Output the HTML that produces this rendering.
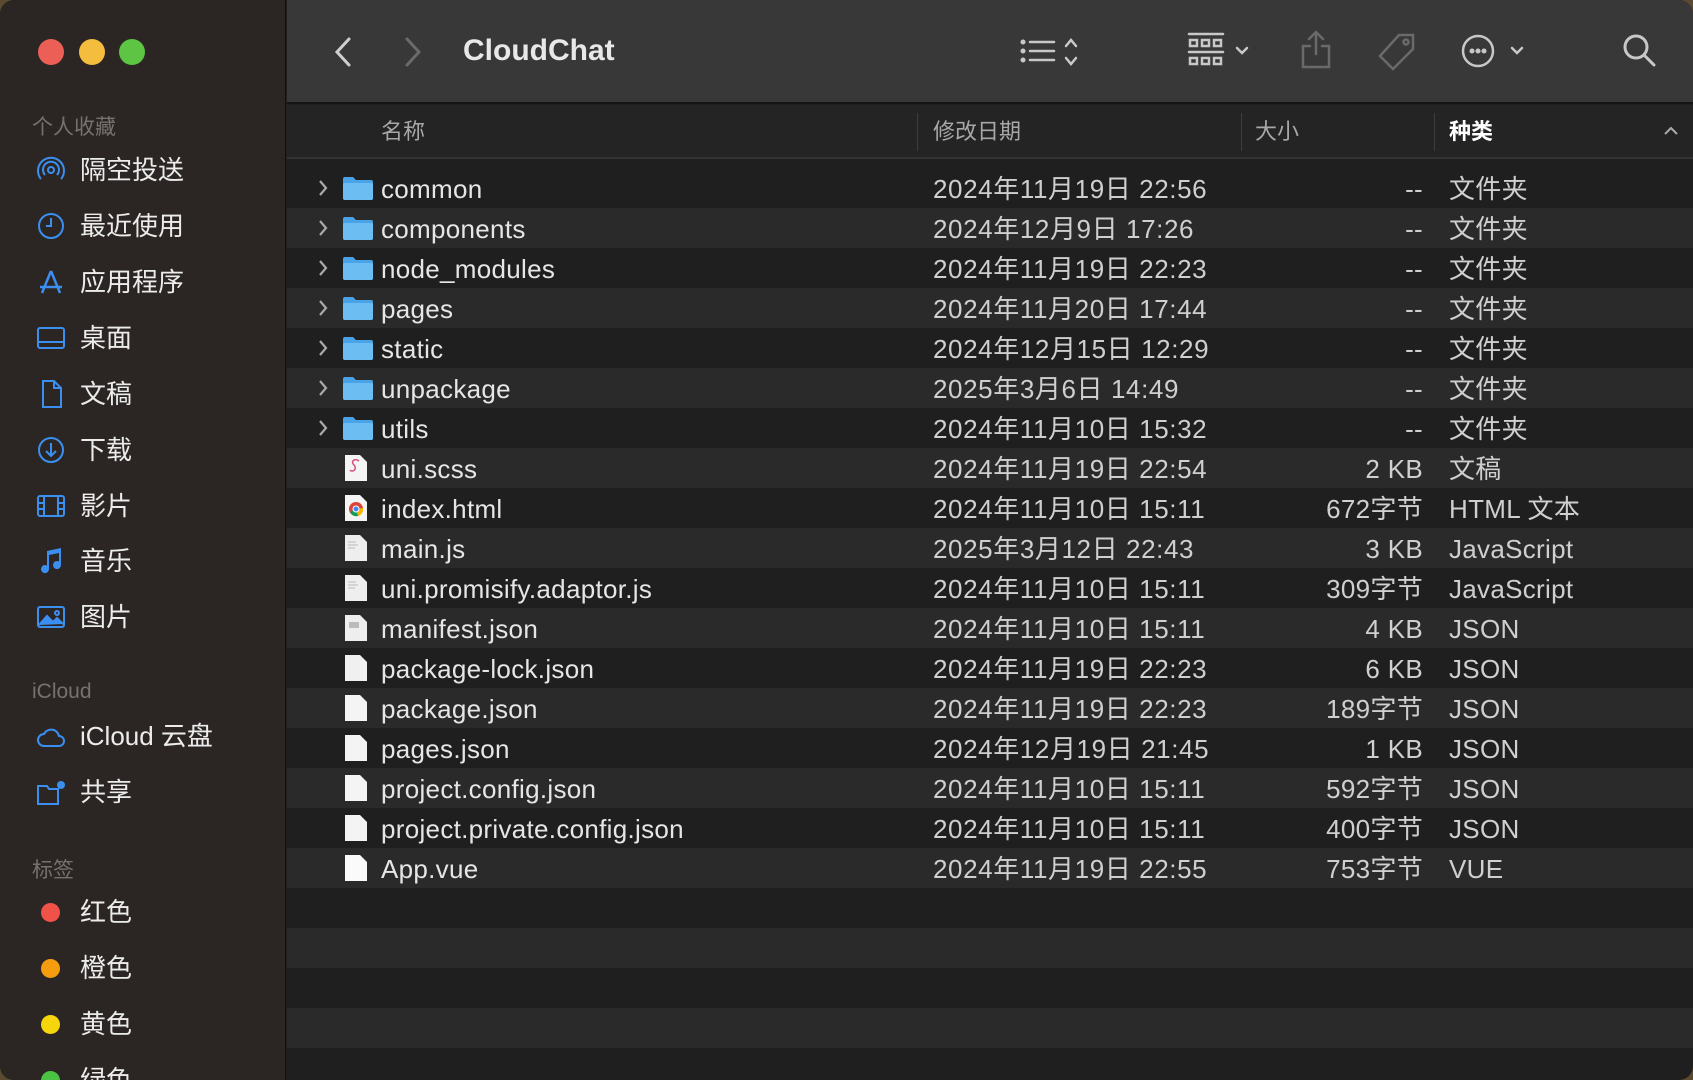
<!DOCTYPE html>
<html><head><meta charset="utf-8"><style>
*{margin:0;padding:0;box-sizing:border-box}
body{width:1693px;height:1080px;overflow:hidden;background:#5a4a30;font-family:"Liberation Sans","Noto Sans CJK SC",sans-serif;}
.win{position:absolute;left:0;top:0;width:1693px;height:1080px;border-radius:14px;overflow:hidden;background:#1f1f1f;}
.side{position:absolute;left:0;top:0;width:286px;height:1080px;background:#2b2624;border-right:1px solid #111;}
.tl{position:absolute;top:39px;width:26px;height:26px;border-radius:50%}
.lbl{position:absolute;left:32px;font-size:21px;color:#77716e}
.it{position:absolute;left:80px;font-size:26px;color:#ececec;line-height:32px}
.ic{position:absolute;left:36px;width:30px;height:30px}
.tool{position:absolute;left:287px;top:0;right:0;height:104px;background:#383838;border-bottom:2px solid #151515}
.hdr{position:absolute;left:287px;top:105px;right:0;height:54px;background:#242424;border-bottom:2px solid #333}
.hdr span{position:absolute;top:13px;font-size:22px;color:#a8a8a8;line-height:28px}
.sep{position:absolute;top:8px;width:1px;height:38px;background:#3c3c3c}
.rows{position:absolute;left:287px;top:0;width:1406px;height:1080px}
.row{position:absolute;left:0;width:1406px;height:40px;font-size:26px;color:#e6e6e6}
.row.a{background:#2a2a2a}
.row span{position:absolute;top:6px;white-space:nowrap;line-height:30px;letter-spacing:0.3px}
.nm{left:94px}.dt{left:646px;color:#cfcfcf;letter-spacing:0.6px!important}.sz{left:0;width:1136px;text-align:right;color:#cfcfcf}.kd{left:1162px;color:#cfcfcf}
.chev{position:absolute;left:30px;top:10px}
.ficon{position:absolute;left:56px;top:8px}
.tb{position:absolute}
</style></head><body><div class="win">
<div class="side">
<div class="tl" style="left:38px;background:#ec5f57"></div>
<div class="tl" style="left:79px;background:#f4bd3e"></div>
<div class="tl" style="left:119px;background:#5ec443"></div>
<div class="lbl" style="top:111px">个人收藏</div>
<svg class="ic" style="top:155px" viewBox="0 0 30 30" fill="none" stroke="#3b8ff0" stroke-width="2"><circle cx="15" cy="15" r="3"/><path d="M9 20a8 8 0 1 1 12 0M5 24a13 13 0 1 1 20 0"/></svg>
<div class="it" style="top:154px">隔空投送</div>
<svg class="ic" style="top:211px" viewBox="0 0 30 30" fill="none" stroke="#3b8ff0" stroke-width="2"><circle cx="15" cy="15" r="12"/><path d="M15 7v8h-5"/></svg>
<div class="it" style="top:210px">最近使用</div>
<svg class="ic" style="top:267px" viewBox="0 0 30 30" fill="none" stroke="#3b8ff0" stroke-width="2.5"><path d="M15 4L6 26M15 4l9 22M4 20h22"/></svg>
<div class="it" style="top:266px">应用程序</div>
<svg class="ic" style="top:323px" viewBox="0 0 30 30" fill="none" stroke="#3b8ff0" stroke-width="2"><rect x="2" y="5" width="26" height="20" rx="2"/><path d="M2 19h26"/></svg>
<div class="it" style="top:322px">桌面</div>
<svg class="ic" style="top:379px" viewBox="0 0 30 30" fill="none" stroke="#3b8ff0" stroke-width="2"><path d="M7 2h11l7 7v19H7zM18 2v7h7"/></svg>
<div class="it" style="top:378px">文稿</div>
<svg class="ic" style="top:435px" viewBox="0 0 30 30" fill="none" stroke="#3b8ff0" stroke-width="2"><circle cx="15" cy="15" r="12"/><path d="M15 8v13M10 16l5 5 5-5"/></svg>
<div class="it" style="top:434px">下载</div>
<svg class="ic" style="top:491px" viewBox="0 0 30 30" fill="none" stroke="#3b8ff0" stroke-width="2"><rect x="2" y="5" width="26" height="20" rx="2"/><path d="M8 5v20M22 5v20M2 12h6M2 18h6M22 12h6M22 18h6"/></svg>
<div class="it" style="top:490px">影片</div>
<svg class="ic" style="top:546px" viewBox="0 0 30 30" fill="#3b8ff0"><path d="M11 5l14-3v17a4 4 0 1 1-2-3.4V7l-10 2v14a4 4 0 1 1-2-3.4z"/></svg>
<div class="it" style="top:545px">音乐</div>
<svg class="ic" style="top:602px" viewBox="0 0 30 30" fill="none" stroke="#3b8ff0" stroke-width="2"><rect x="2" y="5" width="26" height="20" rx="2"/><path d="M3 23l8-9 6 6 4-4 6 6" fill="#3b8ff0"/><circle cx="21" cy="11" r="2"/></svg>
<div class="it" style="top:601px">图片</div>
<div class="lbl" style="top:680px">iCloud</div>
<svg class="ic" style="top:722px" viewBox="0 0 30 30" fill="none" stroke="#3b8ff0" stroke-width="2"><path d="M8 24a6 6 0 0 1 0-12 8 8 0 0 1 15 2 5 5 0 0 1 0 10z"/></svg>
<div class="it" style="top:720px">iCloud 云盘</div>
<svg class="ic" style="top:778px" viewBox="0 0 30 30" fill="none" stroke="#3b8ff0" stroke-width="2"><path d="M2 8h9l2 3h9v15H2z"/><circle cx="25" cy="7" r="3" fill="#3b8ff0"/></svg>
<div class="it" style="top:776px">共享</div>
<div class="lbl" style="top:854px">标签</div>
<div class="tl" style="left:41px;top:903px;width:19px;height:19px;background:#f0524a"></div>
<div class="it" style="top:896px">红色</div>
<div class="tl" style="left:41px;top:959px;width:19px;height:19px;background:#f59d0f"></div>
<div class="it" style="top:952px">橙色</div>
<div class="tl" style="left:41px;top:1015px;width:19px;height:19px;background:#f7d50d"></div>
<div class="it" style="top:1008px">黄色</div>
<div class="tl" style="left:41px;top:1071px;width:19px;height:19px;background:#4cc443"></div>
<div class="it" style="top:1064px">绿色</div>
</div>
<div class="tool">
<svg class="tb" style="left:44px;top:36px" width="24" height="32" viewBox="0 0 24 32" fill="none" stroke="#cfcfcf" stroke-width="3" stroke-linecap="round"><path d="M18 3L6 16l12 13"/></svg>
<svg class="tb" style="left:114px;top:36px" width="24" height="32" viewBox="0 0 24 32" fill="none" stroke="#6a6a6a" stroke-width="3" stroke-linecap="round"><path d="M6 3l12 13L6 29"/></svg>
<div class="tb" style="left:176px;top:34px;font-size:30px;font-weight:bold;color:#e8e8e8">CloudChat</div>
<svg class="tb" style="left:733px;top:36px" width="60" height="34" viewBox="0 0 60 34" fill="none" stroke="#c8c8c8" stroke-width="2.5" stroke-linecap="round"><circle cx="3" cy="6" r="1.3" fill="#c8c8c8"/><circle cx="3" cy="15" r="1.3" fill="#c8c8c8"/><circle cx="3" cy="24" r="1.3" fill="#c8c8c8"/><path d="M10 6h24M10 15h24M10 24h24M46 10l5-6 5 6M46 22l5 6 5-6"/></svg>
<svg class="tb" style="left:900px;top:32px" width="70" height="38" viewBox="0 0 70 38" fill="none" stroke="#c8c8c8" stroke-width="2.5" stroke-linecap="round"><path d="M2 2h34M2 20h34"/><rect x="3" y="8" width="7" height="6"/><rect x="15" y="8" width="7" height="6"/><rect x="27" y="8" width="7" height="6"/><rect x="3" y="26" width="7" height="6"/><rect x="15" y="26" width="7" height="6"/><rect x="27" y="26" width="7" height="6"/><path d="M50 16l5 5 5-5"/></svg>
<svg class="tb" style="left:1013px;top:30px" width="32" height="40" viewBox="0 0 32 40" fill="none" stroke="#6a6a6a" stroke-width="2.5" stroke-linecap="round"><path d="M16 2v22M9 9l7-7 7 7M10 16H3v21h26V16h-7"/></svg>
<svg class="tb" style="left:1090px;top:32px" width="40" height="40" viewBox="0 0 40 40" fill="none" stroke="#6a6a6a" stroke-width="2.5"><path d="M22 3h14v14L16 37 3 24z"/><circle cx="29" cy="10" r="2.5"/></svg>
<svg class="tb" style="left:1173px;top:33px" width="80" height="36" viewBox="0 0 80 36" fill="none" stroke="#c8c8c8" stroke-width="2.5" stroke-linecap="round"><circle cx="18" cy="18" r="15"/><circle cx="12" cy="18" r="1.3" fill="#c8c8c8"/><circle cx="18" cy="18" r="1.3" fill="#c8c8c8"/><circle cx="24" cy="18" r="1.3" fill="#c8c8c8"/><path d="M52 15l5 5 5-5"/></svg>
<svg class="tb" style="left:1335px;top:33px" width="36" height="36" viewBox="0 0 36 36" fill="none" stroke="#c8c8c8" stroke-width="3" stroke-linecap="round"><circle cx="14" cy="14" r="11"/><path d="M22 22l10 10"/></svg>
</div>
<div class="hdr">
<span style="left:94px">名称</span>
<div class="sep" style="left:630px"></div>
<span style="left:646px">修改日期</span>
<div class="sep" style="left:954px"></div>
<span style="left:968px">大小</span>
<div class="sep" style="left:1147px"></div>
<span style="left:1162px;color:#fff;font-weight:bold">种类</span>
<svg style="position:absolute;right:14px;top:20px" width="16" height="12" viewBox="0 0 16 12" fill="none" stroke="#aaa" stroke-width="2"><path d="M2 9l6-6 6 6"/></svg>
</div>
<div class="rows">
<div class="row" style="top:168px"><svg class="chev" width="12" height="20" viewBox="0 0 12 20" fill="none" stroke="#aaa" stroke-width="2.2"><path d="M3 3l6 7-6 7"/></svg><svg class="ficon" width="30" height="24" viewBox="0 0 30 24"><path d="M0 3a2 2 0 0 1 2-2h8l3 3h15a2 2 0 0 1 2 2v16a2 2 0 0 1-2 2H2a2 2 0 0 1-2-2z" fill="#4aa3e6"/><rect x="0" y="7" width="30" height="17" rx="2" fill="#6cbdf2"/></svg><span class="nm">common</span><span class="dt">2024年11月19日 22:56</span><span class="sz">--</span><span class="kd">文件夹</span></div>
<div class="row a" style="top:208px"><svg class="chev" width="12" height="20" viewBox="0 0 12 20" fill="none" stroke="#aaa" stroke-width="2.2"><path d="M3 3l6 7-6 7"/></svg><svg class="ficon" width="30" height="24" viewBox="0 0 30 24"><path d="M0 3a2 2 0 0 1 2-2h8l3 3h15a2 2 0 0 1 2 2v16a2 2 0 0 1-2 2H2a2 2 0 0 1-2-2z" fill="#4aa3e6"/><rect x="0" y="7" width="30" height="17" rx="2" fill="#6cbdf2"/></svg><span class="nm">components</span><span class="dt">2024年12月9日 17:26</span><span class="sz">--</span><span class="kd">文件夹</span></div>
<div class="row" style="top:248px"><svg class="chev" width="12" height="20" viewBox="0 0 12 20" fill="none" stroke="#aaa" stroke-width="2.2"><path d="M3 3l6 7-6 7"/></svg><svg class="ficon" width="30" height="24" viewBox="0 0 30 24"><path d="M0 3a2 2 0 0 1 2-2h8l3 3h15a2 2 0 0 1 2 2v16a2 2 0 0 1-2 2H2a2 2 0 0 1-2-2z" fill="#4aa3e6"/><rect x="0" y="7" width="30" height="17" rx="2" fill="#6cbdf2"/></svg><span class="nm">node_modules</span><span class="dt">2024年11月19日 22:23</span><span class="sz">--</span><span class="kd">文件夹</span></div>
<div class="row a" style="top:288px"><svg class="chev" width="12" height="20" viewBox="0 0 12 20" fill="none" stroke="#aaa" stroke-width="2.2"><path d="M3 3l6 7-6 7"/></svg><svg class="ficon" width="30" height="24" viewBox="0 0 30 24"><path d="M0 3a2 2 0 0 1 2-2h8l3 3h15a2 2 0 0 1 2 2v16a2 2 0 0 1-2 2H2a2 2 0 0 1-2-2z" fill="#4aa3e6"/><rect x="0" y="7" width="30" height="17" rx="2" fill="#6cbdf2"/></svg><span class="nm">pages</span><span class="dt">2024年11月20日 17:44</span><span class="sz">--</span><span class="kd">文件夹</span></div>
<div class="row" style="top:328px"><svg class="chev" width="12" height="20" viewBox="0 0 12 20" fill="none" stroke="#aaa" stroke-width="2.2"><path d="M3 3l6 7-6 7"/></svg><svg class="ficon" width="30" height="24" viewBox="0 0 30 24"><path d="M0 3a2 2 0 0 1 2-2h8l3 3h15a2 2 0 0 1 2 2v16a2 2 0 0 1-2 2H2a2 2 0 0 1-2-2z" fill="#4aa3e6"/><rect x="0" y="7" width="30" height="17" rx="2" fill="#6cbdf2"/></svg><span class="nm">static</span><span class="dt">2024年12月15日 12:29</span><span class="sz">--</span><span class="kd">文件夹</span></div>
<div class="row a" style="top:368px"><svg class="chev" width="12" height="20" viewBox="0 0 12 20" fill="none" stroke="#aaa" stroke-width="2.2"><path d="M3 3l6 7-6 7"/></svg><svg class="ficon" width="30" height="24" viewBox="0 0 30 24"><path d="M0 3a2 2 0 0 1 2-2h8l3 3h15a2 2 0 0 1 2 2v16a2 2 0 0 1-2 2H2a2 2 0 0 1-2-2z" fill="#4aa3e6"/><rect x="0" y="7" width="30" height="17" rx="2" fill="#6cbdf2"/></svg><span class="nm">unpackage</span><span class="dt">2025年3月6日 14:49</span><span class="sz">--</span><span class="kd">文件夹</span></div>
<div class="row" style="top:408px"><svg class="chev" width="12" height="20" viewBox="0 0 12 20" fill="none" stroke="#aaa" stroke-width="2.2"><path d="M3 3l6 7-6 7"/></svg><svg class="ficon" width="30" height="24" viewBox="0 0 30 24"><path d="M0 3a2 2 0 0 1 2-2h8l3 3h15a2 2 0 0 1 2 2v16a2 2 0 0 1-2 2H2a2 2 0 0 1-2-2z" fill="#4aa3e6"/><rect x="0" y="7" width="30" height="17" rx="2" fill="#6cbdf2"/></svg><span class="nm">utils</span><span class="dt">2024年11月10日 15:32</span><span class="sz">--</span><span class="kd">文件夹</span></div>
<div class="row a" style="top:448px"><svg class="ficon" style="left:57px;top:6px" width="24" height="28" viewBox="0 0 24 28"><path d="M1 1h15l7 7v19H1z" fill="#f4f4f4"/><path d="M15 7c-4-3-9 0-5 4s-2 8-4 5" fill="none" stroke="#d84a7a" stroke-width="1.5"/></svg><span class="nm">uni.scss</span><span class="dt">2024年11月19日 22:54</span><span class="sz">2 KB</span><span class="kd">文稿</span></div>
<div class="row" style="top:488px"><svg class="ficon" style="left:57px;top:6px" width="24" height="28" viewBox="0 0 24 28"><path d="M1 1h15l7 7v19H1z" fill="#f4f4f4"/><circle cx="12" cy="15" r="7" fill="#db4437"/><path d="M12 15L6 18a7 7 0 0 0 8 4z" fill="#0f9d58"/><path d="M12 15l7-1a7 7 0 0 1-5 8z" fill="#f4b400"/><circle cx="12" cy="15" r="3" fill="#4285f4" stroke="#fff"/></svg><span class="nm">index.html</span><span class="dt">2024年11月10日 15:11</span><span class="sz">672字节</span><span class="kd">HTML 文本</span></div>
<div class="row a" style="top:528px"><svg class="ficon" style="left:57px;top:6px" width="24" height="28" viewBox="0 0 24 28"><path d="M1 1h15l7 7v19H1z" fill="#eee"/><path d="M4 8h8M4 11h10M4 14h7" stroke="#bbb"/></svg><span class="nm">main.js</span><span class="dt">2025年3月12日 22:43</span><span class="sz">3 KB</span><span class="kd">JavaScript</span></div>
<div class="row" style="top:568px"><svg class="ficon" style="left:57px;top:6px" width="24" height="28" viewBox="0 0 24 28"><path d="M1 1h15l7 7v19H1z" fill="#eee"/><path d="M4 8h8M4 11h10M4 14h7" stroke="#bbb"/></svg><span class="nm">uni.promisify.adaptor.js</span><span class="dt">2024年11月10日 15:11</span><span class="sz">309字节</span><span class="kd">JavaScript</span></div>
<div class="row a" style="top:608px"><svg class="ficon" style="left:57px;top:6px" width="24" height="28" viewBox="0 0 24 28"><path d="M1 1h15l7 7v19H1z" fill="#eee"/><rect x="5" y="8" width="10" height="6" fill="#bbb"/></svg><span class="nm">manifest.json</span><span class="dt">2024年11月10日 15:11</span><span class="sz">4 KB</span><span class="kd">JSON</span></div>
<div class="row" style="top:648px"><svg class="ficon" style="left:57px;top:6px" width="24" height="28" viewBox="0 0 24 28"><path d="M1 1h15l7 7v19H1z" fill="#f0f0f0"/></svg><span class="nm">package-lock.json</span><span class="dt">2024年11月19日 22:23</span><span class="sz">6 KB</span><span class="kd">JSON</span></div>
<div class="row a" style="top:688px"><svg class="ficon" style="left:57px;top:6px" width="24" height="28" viewBox="0 0 24 28"><path d="M1 1h15l7 7v19H1z" fill="#f4f4f4"/></svg><span class="nm">package.json</span><span class="dt">2024年11月19日 22:23</span><span class="sz">189字节</span><span class="kd">JSON</span></div>
<div class="row" style="top:728px"><svg class="ficon" style="left:57px;top:6px" width="24" height="28" viewBox="0 0 24 28"><path d="M1 1h15l7 7v19H1z" fill="#f4f4f4"/></svg><span class="nm">pages.json</span><span class="dt">2024年12月19日 21:45</span><span class="sz">1 KB</span><span class="kd">JSON</span></div>
<div class="row a" style="top:768px"><svg class="ficon" style="left:57px;top:6px" width="24" height="28" viewBox="0 0 24 28"><path d="M1 1h15l7 7v19H1z" fill="#f4f4f4"/></svg><span class="nm">project.config.json</span><span class="dt">2024年11月10日 15:11</span><span class="sz">592字节</span><span class="kd">JSON</span></div>
<div class="row" style="top:808px"><svg class="ficon" style="left:57px;top:6px" width="24" height="28" viewBox="0 0 24 28"><path d="M1 1h15l7 7v19H1z" fill="#f4f4f4"/></svg><span class="nm">project.private.config.json</span><span class="dt">2024年11月10日 15:11</span><span class="sz">400字节</span><span class="kd">JSON</span></div>
<div class="row a" style="top:848px"><svg class="ficon" style="left:57px;top:6px" width="24" height="28" viewBox="0 0 24 28"><path d="M1 1h15l7 7v19H1z" fill="#fafafa"/></svg><span class="nm">App.vue</span><span class="dt">2024年11月19日 22:55</span><span class="sz">753字节</span><span class="kd">VUE</span></div>
<div class="row a" style="top:928px"></div>
<div class="row a" style="top:1008px"></div>
</div>
</div>
</body></html>
